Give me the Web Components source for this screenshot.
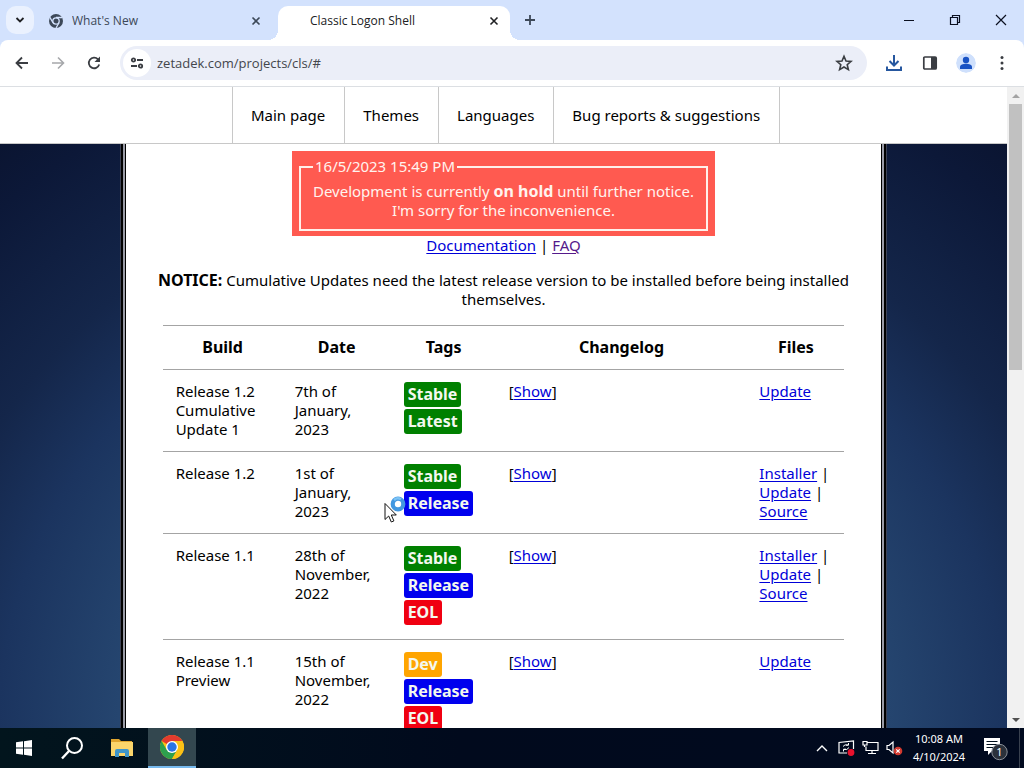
<!DOCTYPE html>
<html lang="en">
<head>
<meta charset="utf-8">
<title>Classic Logon Shell</title>
<style>
html, body { margin: 0; height: 100%; }
body { overflow: hidden; background: #fff; }
</style>
</head>
<body>
<desk-top></desk-top>

<template id="t-desk-top">
  <style>
    :host { display: flex; flex-direction: column; height: 100vh; position: relative; overflow: hidden; }
    .view { flex: 1; min-height: 0; display: flex; border-top: 1px solid #dcdfe3; }
    site-page { flex: 1; min-width: 0; }
    busy-cursor { position: absolute; left: 384px; top: 494px; }
  </style>
  <tab-strip></tab-strip>
  <tool-bar></tool-bar>
  <div class="view">
    <site-page></site-page>
    <scroll-bar></scroll-bar>
  </div>
  <task-bar></task-bar>
  <busy-cursor></busy-cursor>
</template>

<template id="t-tab-strip">
  <style>
    :host { display: flex; height: 40px; background: #d3e2fd; font: 12px/16px "Open Sans", sans-serif; color: #202124; }
    button { border: 0; padding: 0; margin: 0; background: none; color: inherit; display: grid; place-items: center; }
    svg { display: block; }
    .search { width: 28px; height: 28px; margin: 6px 8px 0 6px; border-radius: 10px; background: #eaf1fe; }
    .win { margin-left: auto; display: flex; }
    .win button { width: 46px; height: 40px; }
    .add { width: 28px; height: 28px; margin: 6px 0 0 6px; }
  </style>
  <button class="search" aria-label="Search tabs"><svg width="10" height="10" viewBox="0 0 10 10"><path d="M1.500 3l3.500 3.500L8.500 3" fill="none" stroke="#202124" stroke-width="1.800"/></svg></button>
  <browser-tab>
    <svg slot="icon" width="16" height="16" viewBox="0 0 16 16"><circle cx="8" cy="8" r="7" fill="#3c4858"/><circle cx="8" cy="8" r="3.200" fill="#3c4858" stroke="#d3e2fd" stroke-width="1.300"/><path d="M8 4.500h6.200M5 9.800L1.900 4.400M11 9.800L8 15" stroke="#d3e2fd" stroke-width="1.300" fill="none"/></svg>
    What's New
  </browser-tab>
  <browser-tab active>Classic Logon Shell</browser-tab>
  <button class="add" aria-label="New tab"><svg width="12" height="12" viewBox="0 0 12 12"><path d="M6 1v10M1 6h10" stroke="#3c4858" stroke-width="1.800"/></svg></button>
  <div class="win">
    <button aria-label="Minimize"><svg width="12" height="12" viewBox="0 0 12 12"><path d="M1 6.500h10" stroke="#0b1020"/></svg></button>
    <button aria-label="Restore"><svg width="12" height="12" viewBox="0 0 12 12"><path d="M1.500 3.500h7v7h-7zM3.500 3.500v-2h7v7h-2" fill="none" stroke="#0b1020" stroke-width="1.200"/></svg></button>
    <button aria-label="Close"><svg width="12" height="12" viewBox="0 0 12 12"><path d="M1 1l10 10M11 1L1 11" stroke="#0b1020" stroke-width="1.200"/></svg></button>
  </div>
</template>

<template id="t-browser-tab">
  <style>
    :host { display: flex; align-items: center; width: 232px; height: 34px; margin-top: 6px; padding: 0 8px 5px 6px; box-sizing: border-box; color: #3c4858; position: relative; border-radius: 10px 10px 0 0; }
    :host([active]) { background: #fff; color: #202124; margin-left: 4px; }
    :host([active])::before, :host([active])::after { content: ""; position: absolute; bottom: 0; width: 10px; height: 10px; }
    :host([active])::before { left: -10px; background: radial-gradient(circle at 0 0, transparent 10px, #fff 10px); }
    :host([active])::after { right: -10px; background: radial-gradient(circle at 100% 0, transparent 10px, #fff 10px); }
    .icon { width: 16px; height: 16px; margin-right: 8px; }
    :host([active]) .icon { margin-right: 10px; }
    .label { flex: 1; white-space: nowrap; overflow: hidden; }
    button { border: 0; padding: 0; background: none; display: grid; place-items: center; width: 16px; height: 16px; color: inherit; margin: 0; }
    :host(:not([active])) { padding-right: 10px; }
  </style>
  <span class="icon"><slot name="icon"></slot></span>
  <span class="label"><slot></slot></span>
  <button aria-label="Close tab"><svg width="10" height="10" viewBox="0 0 10 10"><path d="M1.500 1.500l7 7M8.500 1.500l-7 7" stroke="currentColor" stroke-width="1.600"/></svg></button>
</template>

<template id="t-tool-bar">
  <style>
    :host { display: block; background: #d3e2fd; }
    .bar { display: flex; align-items: center; height: 46px; padding: 0 4px; box-sizing: border-box; background: #fff; border-radius: 8px 8px 0 0; color: #3a3d42; }
    button { border: 0; padding: 0; margin: 0; background: none; width: 36px; height: 34px; display: grid; place-items: center; color: inherit; }
    .fwd { color: #a6a8ab; }
    .omni { flex: 1; min-width: 0; height: 34px; margin: 0 9px 0 8px; display: flex; align-items: center; background: #ebeef8; border-radius: 17px; }
    .omni .info { width: 28px; height: 28px; border-radius: 50%; background: #fff; margin: 0 6px 0 3px; }
    .omni .star { width: 46px; }
    input { flex: 1; min-width: 0; border: 0; background: none; padding: 0; outline: 0; font: 13px/20px "Open Sans", sans-serif; color: #43464c; }
    .avatar { width: 20px; height: 20px; border-radius: 50%; }
  </style>
  <div class="bar">
    <button aria-label="Back"><svg width="16" height="16" viewBox="0 0 16 16"><path d="M14 8H3M8 2.500L2.500 8 8 13.500" fill="none" stroke="currentColor" stroke-width="1.800"/></svg></button>
    <button class="fwd" aria-label="Forward"><svg width="16" height="16" viewBox="0 0 16 16"><path d="M2 8h11M8 2.500L13.500 8 8 13.500" fill="none" stroke="currentColor" stroke-width="1.600"/></svg></button>
    <button aria-label="Reload"><svg width="16" height="16" viewBox="0 0 16 16"><path d="M13.200 9.500A5.300 5.300 0 1 1 12 4.300L13.200 5.500" fill="none" stroke="currentColor" stroke-width="1.800"/><path d="M14 1.500v5.500H8.500z" fill="currentColor"/></svg></button>
    <div class="omni">
      <button class="info" aria-label="Site information"><svg width="14" height="12" viewBox="0 0 14 12"><g fill="none" stroke="currentColor" stroke-width="1.800"><circle cx="3.500" cy="3" r="1.700"/><path d="M7 3h6M1 9h6"/><circle cx="10.500" cy="9" r="1.700"/></g></svg></button>
      <input type="text" aria-label="Address" value="zetadek.com/projects/cls/#">
      <button class="star" aria-label="Bookmark"><svg width="18" height="18" viewBox="0 0 18 18"><path d="M9 2.300l2 4.700 5 .4-3.800 3.300 1.200 4.900L9 13l-4.400 2.600 1.200-4.900L2 7.400 7 7z" fill="none" stroke="currentColor" stroke-width="1.600"/></svg></button>
    </div>
    <button aria-label="Downloads"><svg width="18" height="18" viewBox="0 0 18 18"><path d="M9 1v10M4.500 7L9 11.500 13.500 7M2 12.500V16h14v-3.500" fill="none" stroke="#26579f" stroke-width="2"/></svg></button>
    <button aria-label="Side panel"><svg width="16" height="16" viewBox="0 0 16 16"><rect x="1.800" y="2" width="12.400" height="12" rx="1" fill="none" stroke="currentColor" stroke-width="1.700"/><path d="M9 2h5v12H9z" fill="currentColor"/></svg></button>
    <button aria-label="Profile"><svg class="avatar" viewBox="0 0 20 20"><circle cx="10" cy="10" r="10" fill="#cfe0fc"/><circle cx="10" cy="7" r="3.200" fill="#1a53c4"/><path d="M4 16v-2c0-2 3-3.200 6-3.200s6 1.200 6 3.200v2z" fill="#1a53c4"/></svg></button>
    <button aria-label="Menu"><svg width="16" height="16" viewBox="0 0 16 16" fill="currentColor"><circle cx="8" cy="2.500" r="1.500"/><circle cx="8" cy="8" r="1.500"/><circle cx="8" cy="13.500" r="1.500"/></svg></button>
  </div>
</template>

<template id="t-site-page">
  <style>
    :host { display: block; overflow: hidden; font: 15px/19px "Noto Sans", sans-serif; color: #000;
      background: radial-gradient(ellipse 66% 98% at 50% 100%, #2b5285 0%, #25456f 58%, #1b345f 76%, #14264a 90%, #0c1838 112%, #060a1c 145%); }
    a { color: #0000d8; text-underline-offset: 2px; }
    a.seen { color: #551a8b; }
    b { font-size: 16px; }
    nav { display: flex; justify-content: center; height: 56px; padding-left: 5px; background: #fff; border-bottom: 1px solid #c8c8c8; }
    nav a { display: flex; align-items: center; padding: 0 19px 0 18px; border-right: 1px solid #c8c8c8; color: #000; text-decoration: none; }
    nav a:first-child { border-left: 1px solid #c8c8c8; }
    main { width: 75%; margin: 0 auto; background: #fff; text-align: center; padding: 7px 0 40px;
      box-shadow: 0 0 0 1px #000, 0 0 0 3px #999ba6, 0 0 0 5px #000, 0 0 0 6px #3d4255; clip-path: inset(0 -6px); }
    .links { margin: 0 0 16px; }
    p { margin: 0 24px 16px; }
  </style>
  <nav>
    <a href="#">Main page</a><a href="#">Themes</a><a href="#">Languages</a><a href="#">Bug reports &amp; suggestions</a>
  </nav>
  <main>
    <hold-notice><span slot="when">16/5/2023 15:49 PM</span>Development is currently <b>on hold</b> until further notice.<br>I'm sorry for the inconvenience.</hold-notice>
    <div class="links"><a href="#">Documentation</a> | <a class="seen" href="#">FAQ</a></div>
    <p><b>NOTICE:</b> Cumulative Updates need the latest release version to be installed before being installed themselves.</p>
    <build-table></build-table>
  </main>
</template>

<template id="t-hold-notice">
  <style>
    :host { display: block; width: fit-content; margin: 0 auto; padding: 6px 7px 5px; background: #ff5a50; color: #fff3ee; }
    fieldset { margin: 0; border: 2px solid #fff0ea; padding: 6px 12px 9px; min-width: 0; }
    legend { padding: 0 2px; text-align: left; }
  </style>
  <fieldset><legend><slot name="when"></slot></legend><slot></slot></fieldset>
</template>

<template id="t-build-table">
  <style>
    :host { display: block; width: calc(90% + 2px); margin: 0 auto; text-align: left; }
    table { width: 100%; table-layout: fixed; border-collapse: collapse; }
    th, td { border: 0 solid #a4a4a4; border-width: 1px 0; padding: 12px; padding-left: 13px; vertical-align: top; }
    th { font-size: 16px; text-align: center; }
    th:nth-child(1) { width: 94px; } th:nth-child(2) { width: 84px; } th:nth-child(3) { width: 80px; } th:nth-child(5) { width: 73px; }
    a { color: #0000d8; text-underline-offset: 2px; }
    tag-chip + tag-chip { margin-top: 2px; }
    td:nth-child(3) { padding-bottom: 14px; }
    tr.few td:nth-child(3) { padding-bottom: 12px; }
  </style>
  <table>
    <thead><tr><th>Build</th><th>Date</th><th>Tags</th><th>Changelog</th><th>Files</th></tr></thead>
    <tbody></tbody>
  </table>
</template>

<template id="t-tag-chip">
  <style>
    :host { display: block; width: fit-content; padding: 3px 4px; border-radius: 3px; color: #f4f8ef; background: green; font: bold 16px/19px "Noto Sans", sans-serif; }
    :host([kind="Release"]) { background: #00e; }
    :host([kind="EOL"]) { background: #f00011; }
    :host([kind="Dev"]) { background: orange; }
  </style>
  <slot></slot>
</template>

<template id="t-scroll-bar">
  <style>
    :host { display: flex; flex-direction: column; width: 17px; background: #f1f1f1; }
    .end { height: 17px; display: grid; place-items: center; }
    .thumb { height: 266px; margin: 0 2px; background: #c1c1c1; }
    .end:last-child { margin-top: auto; }
  </style>
  <div class="end"><svg width="8" height="4" viewBox="0 0 8 4"><path d="M0 4l4-4 4 4z" fill="#a3a3a3"/></svg></div>
  <div class="thumb"></div>
  <div class="end"><svg width="8" height="4" viewBox="0 0 8 4"><path d="M0 0l4 4 4-4z" fill="#505050"/></svg></div>
</template>

<template id="t-task-bar">
  <style>
    :host { display: flex; height: 40px; background: linear-gradient(90deg, #02151d, #010a1d 45%, #010a1f); color: #fff; font: 11px/18px "Noto Sans", sans-serif; }
    button { border: 0; padding: 0; margin: 0; background: none; width: 48px; height: 40px; display: grid; place-items: center; color: inherit; font: inherit; }
    .app { width: 52px; }
    .on { background: #33474f; border-bottom: 2px solid #76b9ed; }
    .tray { margin-left: auto; display: flex; border-right: 1px solid #39414f; margin-right: 4px; }
    .tray button { width: 24px; }
    .tray .clock { width: 66px; text-align: center; }
    .tray .note { width: 47px; }
  </style>
  <button aria-label="Start"><svg width="16" height="16" viewBox="0 0 16 16" fill="#fff"><path d="M0 2.300L7 1.300V7.500H0zM8 1.200L16 0v7.500H8zM0 8.500h7v6.200l-7-1zM8 8.500h8V16l-8-1.200z"/></svg></button>
  <button aria-label="Search"><svg width="24" height="24" viewBox="0 0 24 24"><circle cx="14.500" cy="9.500" r="7.500" fill="none" stroke="#fff" stroke-width="2"/><path d="M9 15l-7 7.500" stroke="#fff" stroke-width="2.400"/></svg></button>
  <button class="app" aria-label="File Explorer"><svg width="24" height="20" viewBox="0 0 24 20"><path d="M1 1h8l2 2h11v3H1z" fill="#e0a52e"/><path d="M1 4h22v14H1z" fill="#fbd56b"/><path d="M5 19v-6q0-2 2-2h10q2 0 2 2v6h-4v-4H9v4z" fill="#3f95c9"/></svg></button>
  <button class="on" aria-label="Google Chrome"><svg width="24" height="24" viewBox="0 0 24 24"><circle cx="12" cy="12" r="12" fill="#fbc116"/><path d="M12 12L1.600 6A12 12 0 0 1 22.400 6z" fill="#e33b2e"/><path d="M1.600 6A12 12 0 0 0 12 24l5.200-9H6.800z" fill="#2da04e"/><path d="M12 6h10.400A12 12 0 0 1 12 24l5.200-9z" fill="#fbc116"/><circle cx="12" cy="12" r="6" fill="#fff"/><circle cx="12" cy="12" r="4.700" fill="#2a74e4"/></svg></button>
  <div class="tray">
    <button aria-label="Show hidden icons"><svg width="12" height="7" viewBox="0 0 12 7"><path d="M1 6l5-5 5 5" fill="none" stroke="#fff" stroke-width="1.400"/></svg></button>
    <button aria-label="Update status"><svg width="17" height="16" viewBox="0 0 17 16"><path d="M9 13H1V2.500L15.500 1v8" fill="none" stroke="#fff" stroke-width="1.200"/><path d="M5 6.500q1.500-2.500 5-1.500M11 7.500Q9 10.500 6 9.500M10.500 3V5.200H8M5.500 11.500V9.200H8" fill="none" stroke="#fff"/><circle cx="13" cy="12.500" r="3.400" fill="#e8112d"/></svg></button>
    <button aria-label="Network"><svg width="17" height="16" viewBox="0 0 17 16"><path d="M5 2.500h11v8H4V6.500M10 10.500v3M6 13.500h8M1 1.500h4v3.500H1zM2.500 5v2" fill="none" stroke="#fff" stroke-width="1.200"/></svg></button>
    <button aria-label="Volume muted"><svg width="17" height="16" viewBox="0 0 17 16"><path d="M1 5.500h2L7 2v11L3 9.500H1z" fill="none" stroke="#fff" stroke-width="1.200"/><circle cx="12" cy="11" r="4.300" fill="#d2392f"/><path d="M10.300 9.300l3.400 3.400M13.700 9.300l-3.400 3.400" stroke="#fff" stroke-width="1.200"/></svg></button>
    <button class="clock">10:08 AM<br>4/10/2024</button>
    <button class="note" aria-label="Notifications, 1 new"><svg width="26" height="26" viewBox="0 0 26 26"><path d="M1 3h16v13H9l-4 4v-4H1z" fill="#fff"/><path d="M3.500 6.500h11M3.500 9.500h11M3.500 12.500h8" stroke="#01101d" stroke-width="1.200"/><circle cx="16.500" cy="17" r="7.700" fill="#2b313b" stroke="#8a8f98"/><text x="16.500" y="21" font-size="11" text-anchor="middle" fill="#fff">1</text></svg></button>
  </div>
</template>

<template id="t-busy-cursor">
  <style>:host { display: block; pointer-events: none; } svg { display: block; }</style>
  <svg width="24" height="30" viewBox="0 0 24 30"><circle cx="14" cy="10" r="5.300" fill="#fff" stroke="#4197e0" stroke-width="4.200"/><path d="M10 6a5.700 5.700 0 0 1 7-.8" fill="none" stroke="#7cc3f5" stroke-width="2.500"/><path d="M1 9.500v16l3.700-3.500 2.600 6 2.600-1.100-2.600-5.900h5z" fill="#fff" stroke="#111"/></svg>
</template>

<script>
const define = (name, setup) => customElements.define(name, class extends HTMLElement {
  connectedCallback() {
    if (this.shadowRoot) return;
    const root = this.attachShadow({ mode: 'open' });
    root.append(document.getElementById('t-' + name).content.cloneNode(true));
    if (setup) setup(root);
  }
});

const builds = [
  ['Release 1.2 Cumulative Update 1', '7th of January, 2023', ['Stable', 'Latest'], ['Update']],
  ['Release 1.2', '1st of January, 2023', ['Stable', 'Release'], ['Installer', 'Update', 'Source']],
  ['Release 1.1', '28th of November, 2022', ['Stable', 'Release', 'EOL'], ['Installer', 'Update', 'Source']],
  ['Release 1.1 Preview', '15th of November, 2022', ['Dev', 'Release', 'EOL'], ['Update']]
];

define('tag-chip');
define('build-table', root => {
  root.querySelector('tbody').innerHTML = builds.map(([build, date, tags, files]) => `
    <tr class="${tags.length < 3 ? 'few' : ''}"><td>${build}</td><td>${date}</td>
    <td>${tags.map(t => `<tag-chip kind="${t}">${t}</tag-chip>`).join('')}</td>
    <td>[<a href="#">Show</a>]</td>
    <td>${files.map(f => `<a href="#">${f}</a>`).join(' | ')}</td></tr>`).join('');
});
define('hold-notice');
define('site-page');
define('scroll-bar');
define('browser-tab');
define('tab-strip');
define('tool-bar');
define('task-bar');
define('busy-cursor');
define('desk-top');
</script>
</body>
</html>
